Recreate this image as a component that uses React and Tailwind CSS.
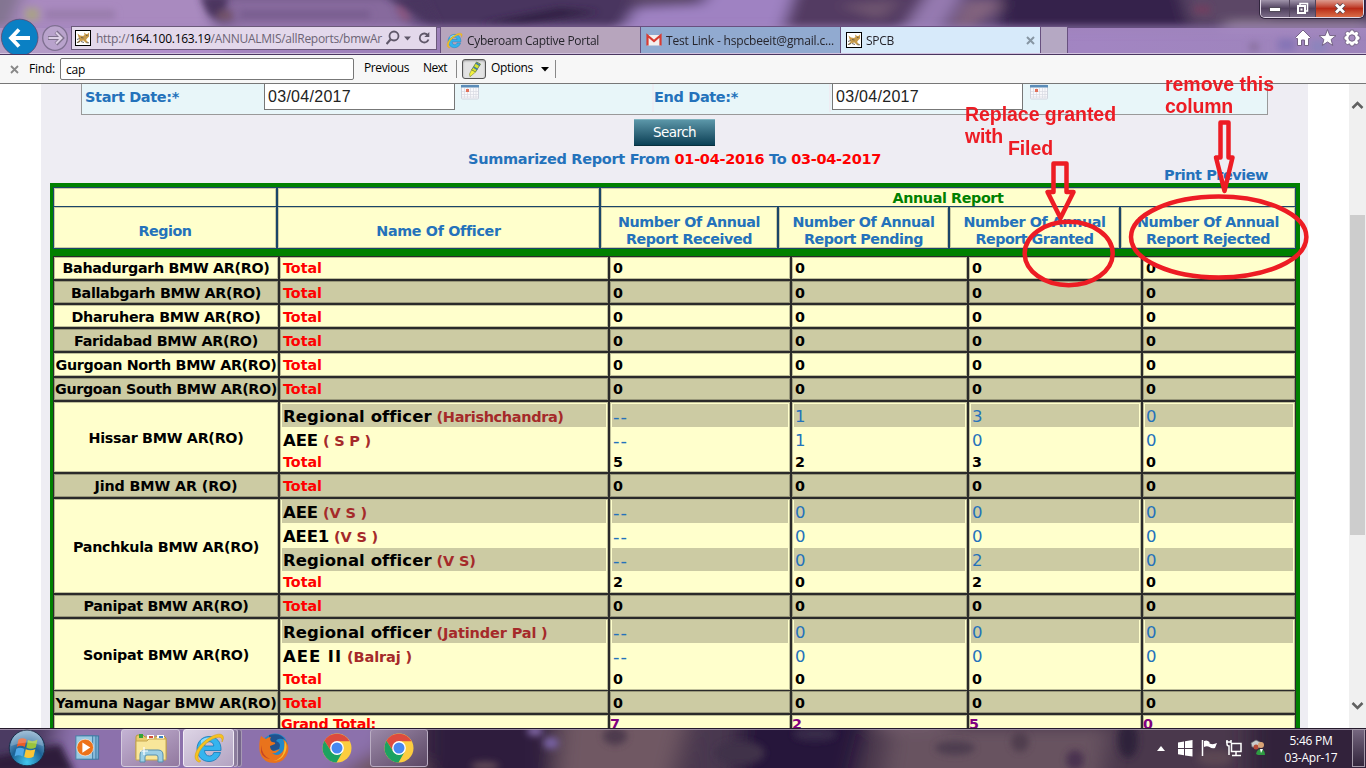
import React, { useLayoutEffect, useRef } from "react";

// Text run set to a known width by adjusting its tracking.
function Fit({ w, className = "", children }) {
  const ref = useRef(null);
  useLayoutEffect(() => {
    const el = ref.current;
    el.style.letterSpacing = "0px";
    const natural = el.getBoundingClientRect().width;
    el.style.letterSpacing = (w - natural) / el.textContent.length + "px";
  }, [w]);
  return (
    <span ref={ref} className={"inline-block shrink-0 whitespace-pre " + className}>
      {children}
    </span>
  );
}

const UI = "font-['Open_Sans','Noto_Sans',sans-serif]";

function TopWallpaper() {
  return (
    <svg className="absolute inset-0" width="1366" height="55" viewBox="0 0 1366 55" preserveAspectRatio="none">
      <defs>
        <filter id="b1" filterUnits="userSpaceOnUse" x="-60" y="-60" width="1500" height="180"><feGaussianBlur stdDeviation="8 5" /></filter>
        <filter id="b2" filterUnits="userSpaceOnUse" x="-60" y="-60" width="1500" height="180"><feGaussianBlur stdDeviation="3.5" /></filter>
        <linearGradient id="navglass" x1="0" x2="1" y1="0" y2="0">
          <stop offset="0" stopColor="#b7a3c6" /><stop offset=".12" stopColor="#b38fcd" />
          <stop offset=".32" stopColor="#a487c2" /><stop offset=".8" stopColor="#ac8ecd" /><stop offset="1" stopColor="#a68cc4" />
        </linearGradient>
      </defs>
      <rect width="1366" height="55" fill="#594472" />
      <g filter="url(#b1)">
        <path d="M-20 -20H205L225 60H-20Z" fill="#a98abf" />
        <path d="M-20 -10H25L5 40H-20Z" fill="#837591" />
        <path d="M218 -4H395L420 40H232Z" fill="#876a9d" />
        <path d="M400 -10H640V35H440Z" fill="#49345e" />
        <path d="M636 8L700 5L720 -20H810L775 40H615Z" fill="#9f82c2" />
        <path d="M640 -18H715L690 4H630Z" fill="#5d4969" />
        <path d="M795 -10H930V35H780Z" fill="#523b62" />
        <path d="M840 5L900 0L880 20Z" fill="#6e546f" />
        <path d="M930 -10H965L940 35H900Z" fill="#957ab0" />
        <path d="M965 0H1010L970 30H950Z" fill="#82647e" />
        <path d="M1000 -10H1370V32H1000Z" fill="#35234b" />
        <path d="M1180 -10H1270V25H1190Z" fill="#5b4766" />
        <path d="M1225 20H1370V32H1225Z" fill="#86758d" />
      </g>
      <g filter="url(#b2)">
        <rect x="25" y="8" width="14" height="13" fill="#a9a189" />
        <rect x="45" y="10" width="70" height="9" fill="#987cab" />
        <path d="M480 24L560 8L600 12L520 25Z" fill="#302044" />
        <path d="M200 -4H228L222 22L208 14Z" fill="#4b365f" />
        <rect x="218" y="11" width="14" height="9" fill="#735367" />
        <rect x="240" y="11" width="130" height="7" fill="#765b8d" />
        <path d="M385 -4H425L440 28Z" fill="#49345f" />
        <path d="M398 8L408 20" stroke="#9c5277" strokeWidth="4" />
        <rect x="1194" y="6" width="16" height="7" fill="#743c5e" />
      </g>
      <rect y="28" width="1366" height="26" fill="url(#navglass)" opacity=".88" />
      <g filter="url(#b2)">
        <rect x="-10" y="25" width="1400" height="8" fill="#a386bf" opacity=".6" />
        <circle cx="1254" cy="47" r="5" fill="#89719f" />
        <rect x="1278" y="39" width="17" height="12" fill="#8574b5" />
        <rect x="1311" y="41" width="15" height="11" fill="#8a84bc" />
      </g>
      <rect y="53" width="1366" height="1" fill="#d2c3df" />
      <rect y="54" width="1366" height="1" fill="#4a3660" />
    </svg>
  );
}

function CatIcon() {
  return (
    <svg width="16" height="16" viewBox="0 0 16 16" className="shrink-0">
      <rect x=".5" y=".5" width="15" height="15" fill="#fff" stroke="#000" />
      <path d="M2.500 3.500L5 5.500L8 6L9.500 5L9 2.500L11 4H12.500L14 2.500V6.500L12 8.500L11 10L13.500 12.500L11 13L8.500 10.500L6 11L3 13H1.500L4.500 10L3.500 7Z" fill="#c79a4a" />
      <path d="M2 9.500L4.500 8.500M6 11.500L9 12.500M2 12.500L5 11.500M11.500 12.800H14M11 5.500H12.500M6 7.500L8.500 8" stroke="#5d5a55" fill="none" strokeWidth=".9" />
    </svg>
  );
}

function IELogo({ size }) {
  return (
    <svg width={size} height={size} viewBox="0 0 32 32" className="shrink-0">
      <path d="M27.500 20.500C26 26 21.500 29.500 16 29.500C9 29.500 4 24 4 17C4 10 9 4.500 16 4.500C23.500 4.500 28.500 10 28 18.500H11.500C11.800 22 13.500 24 16.500 24C18.700 24 20 23 20.800 20.500ZM11.500 14H20.800C20.500 11.300 19 9.700 16.200 9.700C13.500 9.700 12 11.300 11.500 14Z" fill="#35b4ee" stroke="#1279b7" strokeWidth=".8" fillRule="evenodd" />
      <path d="M8 8.500C11 5 18 4.500 22 7C18 6 12 7 8 12Z" fill="#b7e8fc" opacity=".7" />
      <path d="M5.500 30C-1 27 2.500 18 9 11.500C16 4.500 26 0 29.500 3.200C31 4.800 30.500 7.500 29 10C29.500 6.800 28.300 5 25.500 5.300C18 6 8 14.500 5.500 22C4.500 25.500 5 28.500 7.500 28.700C8 29.300 7 30.300 5.500 30Z" fill="#f6c220" stroke="#d59b0b" strokeWidth=".5" />
    </svg>
  );
}

function Chrome() {
  return (
    <svg width="30" height="30" viewBox="0 0 30 30">
      <circle cx="15" cy="15" r="14.500" fill="#fccd3f" />
      <path d="M2.400 7.800A14.500 14.500 0 0 1 27.600 8.200H15L9.200 18.200Z" fill="#dd4b3e" />
      <path d="M2.400 7.800L9.300 18.600Q12 22 15.500 21.800L20.800 18.500L14.500 29.500A14.500 14.500 0 0 1 2.400 7.800Z" fill="#1ca261" />
      <circle cx="15" cy="15" r="6.900" fill="#fff" />
      <circle cx="15" cy="15" r="5.500" fill="#4688f1" />
    </svg>
  );
}

function Tab({ w, icon, label, lw, cls, close }) {
  return (
    <div className={"flex h-[27px] shrink-0 items-center gap-1 border-t border-r border-[#68507f] pl-[5px] " + w + " " + cls}>
      {icon}
      <Fit w={lw} className="pt-[2px] text-[12px] text-[#26252c]">{label}</Fit>
      {close && (
        <svg width="9" height="9" viewBox="0 0 9 9" className="mr-[5px] ml-auto"><path d="M1 1L8 8M8 1L1 8" stroke="#8796a3" strokeWidth="2" /></svg>
      )}
    </div>
  );
}

function BrowserTop() {
  return (
    <header className={"relative h-[55px] shrink-0 overflow-hidden " + UI}>
      <TopWallpaper />
      <div className="relative flex h-[26px] justify-end pr-[2px]">
        <div className="flex h-[18px] overflow-hidden rounded-b-[5px] border border-t-0 border-[#e1d8e7] shadow-[0_0_0_1px_#30243c]">
          <div className="flex w-[29px] items-center justify-center border-r border-[#51445b] bg-linear-to-b from-[#a094aa] via-[#50415e] to-[#7a6b87]">
            <svg width="12" height="6" viewBox="0 0 12 6"><rect x=".5" y="1.500" width="11" height="4" fill="#fff" stroke="#514a58" /></svg>
          </div>
          <div className="flex w-[26px] items-center justify-center border-r border-[#51445b] bg-linear-to-b from-[#a094aa] via-[#50415e] to-[#7a6b87]">
            <svg width="13" height="13" viewBox="0 0 13 13"><path d="M4 4V1.500H11.500V9H9.500" fill="none" stroke="#fff" strokeWidth="1.500" /><rect x="2" y="4" width="7" height="7" fill="#665871" stroke="#fff" strokeWidth="2" /><rect x="4.500" y="6.500" width="2" height="2" fill="#fff" /></svg>
          </div>
          <div className="flex w-[47px] items-center justify-center bg-linear-to-b from-[#dc9b8f] via-[#b92a16] to-[#d96b47]">
            <svg width="12" height="11" viewBox="0 0 12 11"><path d="M2 1.500L10 9.500M10 1.500L2 9.500" stroke="#57454d" strokeWidth="4.500" /><path d="M2 1.500L10 9.500M10 1.500L2 9.500" stroke="#fff" strokeWidth="2.800" /></svg>
          </div>
        </div>
      </div>
      <div className="relative flex h-[27px] items-start">
        <svg width="71" height="36" viewBox="0 0 71 36" className="-mt-[8px] shrink-0">
          <circle cx="19.700" cy="19.500" r="18.300" fill="#0a80c4" stroke="#5d4a70" strokeWidth=".8" />
          <path d="M30 20H12M19 11.500L11 20L19 28.500" fill="none" stroke="#fff" strokeWidth="3.800" />
          <circle cx="55" cy="20" r="12.300" fill="#b9a3cc" stroke="#7f7091" strokeWidth="1.300" />
          <path d="M48 20H61M56 14L62 20L56 26" fill="none" stroke="#7e718c" strokeWidth="4" />
          <path d="M48.500 20H61M56 14.500L61.500 20L56 25.500" fill="none" stroke="#ddd0e6" strokeWidth="2" />
        </svg>
        <div className="flex h-[24px] w-[366px] shrink-0 items-center border border-[#6b5a7a] bg-[#e3d8eb] pl-[3px]">
          <CatIcon />
          <Fit w={286} className="ml-[5px] pt-px text-[12px] text-[#6c6475]">http://<span className="text-black">164.100.163.19</span>/ANNUALMIS/allReports/bmwAr</Fit>
          <svg width="50" height="18" viewBox="0 0 50 18" className="ml-[4px] shrink-0">
            <circle cx="8" cy="7" r="4.500" fill="none" stroke="#5f5769" strokeWidth="1.800" />
            <path d="M4.500 10.500L.5 15" stroke="#5f5769" strokeWidth="2.200" />
            <path d="M18 7.500H25L21.500 11.500Z" fill="#5f5769" />
            <path d="M42 6.500A4.500 4.500 0 1 0 42.500 10.500" fill="none" stroke="#5f5769" strokeWidth="1.800" /><path d="M43.300 3V8H38.300Z" fill="#5f5769" />
          </svg>
        </div>
        <div className="w-[3px] shrink-0" />
        <Tab w="w-[201px] border-l" cls="bg-[#b7a5bd]" icon={<IELogo size={17} />} lw={132} label="Cyberoam Captive Portal" />
        <Tab w="w-[200px]" cls="bg-[#91aad0]" lw={168} label="Test Link - hspcbeeit@gmail.c..." icon={
          <svg width="16" height="16" viewBox="0 0 16 16" className="shrink-0"><rect x="1" y="3" width="14" height="10.500" fill="#f4efee" /><path d="M1.500 13.500V3.500L8 9L14.500 3.500V13.500" fill="none" stroke="#d83b32" strokeWidth="2.200" /></svg>
        } />
        <Tab w="w-[200px]" cls="bg-[#d7eafa]" icon={<CatIcon />} lw={28} label="SPCB" close />
        <div className="h-[27px] w-[27px] shrink-0 border-t border-r border-[#68507f] bg-[#b5a8c3]" />
        <svg width="70" height="24" viewBox="4 0 70 24" className="mr-px ml-auto shrink-0">
          <g fill="#fff" stroke="#756386" strokeWidth="1">
            <path d="M12 4L19.500 11.500L18 13L17.500 12.500V19.500H13.500V14H10.500V19.500H6.500V12.500L6 13L4.500 11.500Z" />
            <path d="M36.500 3.500L38.800 9.500L45 9.700L40.100 13.500L41.800 19.500L36.500 16L31.200 19.500L32.900 13.500L28 9.700L34.200 9.500Z" />
            <path d="M59.500 4H62.500L63.300 6.200L65.800 5.200L67.800 7.200L66.800 9.500L69 10.500V13.500L66.800 14.500L67.800 16.800L65.800 18.800L63.500 17.800L62.500 20H59.500L58.500 17.800L56.200 18.800L54.200 16.800L55.200 14.500L53 13.500V10.500L55.200 9.500L54.200 7.200L56.200 5.200L58.700 6.200Z" />
            <circle cx="61" cy="12" r="3.200" fill="#a78dc0" />
          </g>
        </svg>
      </div>
    </header>
  );
}

function FindBar() {
  return (
    <div className={"flex h-[29px] shrink-0 items-center border-b border-[#777] bg-[#f7f7f7] text-[12px] text-black " + UI}>
      <svg width="9" height="9" viewBox="0 0 9 9" className="ml-[10px] shrink-0"><path d="M1 1L8 8M8 1L1 8" stroke="#888" strokeWidth="1.800" /></svg>
      <Fit w={26} className="ml-[10px]">Find:</Fit>
      <div className="ml-[5px] flex h-[22px] w-[294px] shrink-0 items-center rounded-[2px] border border-[#777] bg-white pt-[2px] pl-[5px]"><Fit w={19}>cap</Fit></div>
      <Fit w={45} className="ml-[10px] -mt-[2px]">Previous</Fit>
      <Fit w={24} className="ml-[14px] -mt-[2px]">Next</Fit>
      <div className="ml-[9px] h-[18px] w-px shrink-0 bg-[#888]" />
      <div className="ml-[5px] flex h-5 w-6 shrink-0 items-center justify-center rounded-[3px] border border-[#555] bg-[#e3e3e3] shadow-[inset_0_1px_2px_#999]">
        <svg width="18" height="18" viewBox="0 0 18 18"><path d="M11.500 2L15.500 4L10.500 12L6.500 10Z" fill="#d9e42c" stroke="#5e7b3a" strokeWidth=".8" /><path d="M11 3L15 5.500M8.500 7L12.500 9.500" stroke="#417ba5" strokeWidth="1.500" /><path d="M6.500 10L10.500 12L5 16.800L4.500 14Z" fill="#f4f13c" stroke="#7d8a38" strokeWidth=".6" /></svg>
      </div>
      <Fit w={42} className="ml-[5px] -mt-[2px]">Options</Fit>
      <svg width="8" height="5" viewBox="0 0 8 5" className="ml-[8px] shrink-0"><path d="M0 0H8L4 4.500Z" fill="#000" /></svg>
      <div className="ml-[6px] h-[18px] w-px shrink-0 bg-[#888]" />
    </div>
  );
}

function Calendar() {
  return (
    <svg width="18" height="16" viewBox="0 0 18 16" className="shrink-0">
      <rect x=".5" y="1" width="17" height="14" rx="1" fill="#f8f8fb" stroke="#d0d4de" />
      <rect x="0" y="1" width="18" height="2.500" fill="#5b8cb8" />
      <path d="M3.500 4V14M6.500 4V14M9.500 4V14M12.500 4V14M15 4V14M1 7.500H17M1 10.500H17M1 13H17" stroke="#d9dae2" strokeWidth=".7" />
      <rect x="5" y="5" width="3" height="3" fill="#e1705a" />
    </svg>
  );
}

function DateField() {
  return (
    <div className="-mt-px flex h-[27px] w-[191px] shrink-0 items-center border border-[#777] bg-white pl-[3px] font-['Liberation_Sans',Arial,sans-serif] text-[16px] font-normal text-[#222]">
      <Fit w={83}>03/04/2017</Fit>
    </div>
  );
}

function SearchForm() {
  return (
    <div className="ml-[40px] flex h-[31px] w-[1187px] shrink-0 items-start border border-t-0 border-[#999] bg-[#e8f6f9] text-[14.500px] font-bold text-[#2472bb]">
      <div className="flex h-[28px] w-[182px] shrink-0 items-center pl-[3px]"><Fit w={94}>Start Date:*</Fit></div>
      <DateField />
      <div className="ml-[6px] flex w-[192px] shrink-0"><Calendar /></div>
      <div className="flex h-[28px] w-[179px] shrink-0 items-center border-r-2 border-l-2 border-[#eeedf3] -ml-px pl-0"><Fit w={84}>End Date:*</Fit></div>
      <div className="ml-px flex"><DateField /></div>
      <div className="ml-[7px] flex"><Calendar /></div>
    </div>
  );
}

const CELL = "border border-[#2a2a2a] shadow-[inset_0_0_0_1px_rgba(0,0,0,0.25)] ";
const HCELL = "border border-[#1b4569] shadow-[inset_0_0_0_1px_rgba(0,0,0,0.2)] bg-[#ffffcc] ";

function HeadCell({ a, aw, b, bw }) {
  return (
    <div className={HCELL + "flex flex-col items-center pt-[7px] leading-[17px]"}>
      <Fit w={aw}>{a}</Fit>
      <Fit w={bw}>{b}</Fit>
    </div>
  );
}

const zero = ["0", "0", "0", "0"];
const regions = [
  { name: "Bahadurgarh BMW AR(RO)", w: 207, h: "h-[24px]", totals: zero, pt: "" },
  { name: "Ballabgarh BMW AR(RO)", w: 190, h: "h-[24px]", totals: zero, pt: "pt-[2px]", alt: true },
  { name: "Dharuhera BMW AR(RO)", w: 189, h: "h-[24px]", totals: zero, pt: "pt-[2px]" },
  { name: "Faridabad BMW AR(RO)", w: 184, h: "h-[24px]", totals: zero, pt: "pt-[2px]", alt: true },
  { name: "Gurgoan North BMW AR(RO)", w: 221, h: "h-[25px]", totals: zero, pt: "pt-px" },
  { name: "Gurgoan South BMW AR(RO)", w: 222, h: "h-[24px]", totals: zero, pt: "pt-px", alt: true },
  {
    name: "Hissar BMW AR(RO)", w: 155, h: "h-[72px]", top: "pt-[2px]", totalH: "h-[20px]", totals: ["5", "2", "3", "0"],
    officers: [
      { role: "Regional officer", rw: 147, who: "(Harishchandra)", ww: 127, v: ["--", "1", "3", "0"], band: true },
      { role: "AEE", rw: 35, who: "( S P )", ww: 48, v: ["--", "1", "0", "0"] },
    ],
  },
  { name: "Jind BMW AR (RO)", w: 143, h: "h-[25px]", totals: zero, pt: "pt-[2px]", alt: true },
  {
    name: "Panchkula BMW AR(RO)", w: 186, h: "h-[96px]", top: "pt-px", totalH: "h-[20px]", totals: ["2", "0", "2", "0"],
    officers: [
      { role: "AEE", rw: 35, who: "(V S )", ww: 44, v: ["--", "0", "0", "0"], band: true },
      { role: "AEE1", rw: 46, who: "(V S )", ww: 44, v: ["--", "0", "0", "0"] },
      { role: "Regional officer", rw: 147, who: "(V S)", ww: 39, v: ["--", "0", "2", "0"], band: true },
    ],
  },
  { name: "Panipat BMW AR(RO)", w: 165, h: "h-[24px]", totals: zero, pt: "", alt: true },
  {
    name: "Sonipat BMW AR(RO)", w: 166, h: "h-[72px]", top: "pt-px", totalH: "h-[22px]", totals: zero,
    officers: [
      { role: "Regional officer", rw: 147, who: "(Jatinder Pal )", ww: 111, v: ["--", "0", "0", "0"], band: true },
      { role: "AEE II", rw: 59, who: "(Balraj )", ww: 65, v: ["--", "0", "0", "0"] },
    ],
  },
  { name: "Yamuna Nagar BMW AR(RO)", w: 221, h: "h-[24px]", totals: zero, pt: "pt-[2px]", alt: true },
];

function Band({ on, children }) {
  return (
    <div className="h-[24px]">
      <div className={"flex h-[23px] items-center pt-[2px] pl-px " + (on ? "bg-[#cccba3]" : "")}>{children}</div>
    </div>
  );
}

function RegionRow({ r }) {
  const bg = r.alt ? "bg-[#cccba3] " : "bg-[#ffffcc] ";
  const cell = CELL + bg + (r.officers ? "px-[2px] " + r.top : "flex items-center pl-[3px] " + r.pt);
  return (
    <div className={"grid grid-cols-[226px_330px_182px_177px_174px_154px] " + r.h}>
      <div className={CELL + bg + "flex items-center justify-center " + (r.officers ? "pt-[2px]" : r.pt)}>
        <Fit w={r.w}>{r.name}</Fit>
      </div>
      <div className={cell}>
        {r.officers?.map((o) => (
          <Band key={o.role} on={o.band}>
            <Fit w={o.rw} className="text-[16.500px]">{o.role}</Fit>
            <Fit w={o.ww} className="ml-[5px] pt-px text-[14.500px] text-[#a52a2a]">{o.who}</Fit>
          </Band>
        ))}
        <div className={"flex items-center text-[#ff0000] " + (r.officers ? "pl-px " + r.totalH : "")}><Fit w={39}>Total</Fit></div>
      </div>
      {r.totals.map((t, i) => (
        <div key={i} className={cell}>
          {r.officers?.map((o) => (
            <Band key={o.role} on={o.band}>
              <Fit w={o.v[i].length > 1 ? 15 : 10} className={"font-normal text-[#2472bb] " + (o.v[i].length > 1 ? "text-[18px]" : "text-[16.500px]")}>{o.v[i]}</Fit>
            </Band>
          ))}
          <div className={"flex items-center " + (r.officers ? "pl-px " + r.totalH : "")}>{t}</div>
        </div>
      ))}
    </div>
  );
}

function Report() {
  return (
    <div className="ml-[9px] w-[1250px] shrink-0 border-x-[3px] border-t-[4px] border-r-[4px] border-[#008000] bg-[#008000] text-[14.300px] leading-[17px] font-bold text-black">
      <div className="grid h-[19px] grid-cols-[224px_323px_696px]">
        <div className={HCELL} />
        <div className={HCELL} />
        <div className={HCELL + "flex items-center justify-center pt-[2px] text-[#008000]"}><Fit w={111}>Annual Report</Fit></div>
      </div>
      <div className="mb-[8px] grid h-[42px] grid-cols-[224px_323px_178px_171px_171px_176px] text-[#2472bb]">
        <div className={HCELL + "flex items-center justify-center pt-[8px]"}><Fit w={53}>Region</Fit></div>
        <div className={HCELL + "flex items-center justify-center pt-[8px]"}><Fit w={123}>Name Of Officer</Fit></div>
        <HeadCell a="Number Of Annual" aw={142} b="Report Received" bw={126} />
        <HeadCell a="Number Of Annual" aw={142} b="Report Pending" bw={119} />
        <HeadCell a="Number Of Annual" aw={142} b="Report Granted" bw={118} />
        <HeadCell a="Number Of Annual" aw={142} b="Report Rejected" bw={124} />
      </div>
      {regions.map((r) => <RegionRow key={r.name} r={r} />)}
      <div className="grid h-[30px] grid-cols-[226px_330px_182px_177px_174px_154px] text-[#800080]">
        <div className={CELL + "bg-[#ffffcc]"} />
        <div className={CELL + "bg-[#ffffcc] pt-px pl-px text-[#ff0000]"}><Fit w={95}>Grand Total:</Fit></div>
        {["7", "2", "5", "0"].map((v) => <div key={v} className={CELL + "bg-[#ffffcc] pt-px"}>{v}</div>)}
      </div>
    </div>
  );
}

function Page() {
  return (
    <div className="flex h-[644px] shrink-0 overflow-hidden bg-white font-['DejaVu_Sans',Verdana,sans-serif]">
      <div className="ml-[41px] flex w-[1267px] shrink-0 flex-col bg-[#eeedf3]">
        <SearchForm />
        <div className="mt-[4px] ml-[593px] flex h-[27px] w-[81px] shrink-0 items-center justify-center border-t border-b border-t-[#7fb3bf] border-b-[#08303d] bg-linear-to-b from-[#5b96a8] to-[#094156] text-[13.500px] text-white"><Fit w={43}>Search</Fit></div>
        <div className="mt-[4px] ml-[427px] flex h-[18px] shrink-0 items-center pt-px text-[14.500px] font-bold text-[#2472bb]">
          <Fit w={413}>Summarized Report From <span className="text-[#ff0000]">01-04-2016</span> To <span className="text-[#ff0000]">03-04-2017</span></Fit>
        </div>
        <div className="flex h-[15px] shrink-0 justify-end pr-[40px] text-[14.500px] leading-[15px] font-bold text-[#2472bb]"><Fit w={104}>Print Preview</Fit></div>
        <Report />
      </div>
      <div className="ml-auto flex w-[17px] shrink-0 flex-col items-center bg-[#f0f0f0] pt-[16px]">
        <svg width="13" height="10" viewBox="0 0 13 10"><path d="M1.500 8L6.500 3L11.500 8" fill="none" stroke="#606060" strokeWidth="2.500" /></svg>
        <div className="mt-[105px] h-[320px] w-[15px] bg-[#cdcdcd]" />
        <svg width="13" height="10" viewBox="0 0 13 10" className="mt-[166px]"><path d="M1.500 2L6.500 7L11.500 2" fill="none" stroke="#606060" strokeWidth="2.500" /></svg>
      </div>
    </div>
  );
}

function TaskWallpaper() {
  return (
    <svg className="absolute inset-0" width="1366" height="40" viewBox="0 0 1366 40">
      <defs>
        <filter id="b3" filterUnits="userSpaceOnUse" x="-60" y="-60" width="1500" height="160"><feGaussianBlur stdDeviation="11 7" /></filter>
      </defs>
      <rect width="1366" height="40" fill="#4a384c" />
      <g filter="url(#b3)">
        <path d="M-40 -20H55V60H-40Z" fill="#4c3a62" />
        <path d="M60 -20H400L370 60H50Z" fill="#8c71ac" />
        <path d="M330 50L390 15L440 50Z" fill="#6e5560" />
        <path d="M425 -20H550V60H425Z" fill="#2d1c3c" />
        <path d="M562 -20H690L670 60H555Z" fill="#705863" />
        <path d="M690 -20H750V60H690Z" fill="#493850" />
        <path d="M740 -20H870L850 60H735Z" fill="#25143a" />
        <path d="M890 0H1110L1100 60H880Z" fill="#675260" />
        <path d="M870 -20H960L940 5H880Z" fill="#6e5868" />
        <path d="M1250 -20H1400V60H1250Z" fill="#30243a" />
      </g>
      <g filter="url(#b2)">
        <path d="M-10 30L60 16L75 45H-10Z" fill="#2d1d3a" />
        <ellipse cx="535" cy="3" rx="8" ry="5" fill="#8269a8" /><ellipse cx="551" cy="15" rx="8" ry="6" fill="#7862a4" />
        <ellipse cx="485" cy="38" rx="14" ry="4" fill="#66505a" />
        <ellipse cx="615" cy="8" rx="12" ry="9" fill="#4d3b4e" />
        <ellipse cx="740" cy="25" rx="25" ry="12" fill="#3f3049" />
        <ellipse cx="815" cy="6" rx="22" ry="7" fill="#392a48" />
        <ellipse cx="955" cy="20" rx="20" ry="7" fill="#4e3d50" />
        <ellipse cx="1020" cy="14" rx="9" ry="10" fill="#4f3d4e" />
        <ellipse cx="1075" cy="32" rx="9" ry="10" fill="#48304f" />
        <ellipse cx="1128" cy="12" rx="10" ry="18" fill="#2f203b" />
        <ellipse cx="1215" cy="30" rx="18" ry="8" fill="#5b4752" />
      </g>
      <rect width="1366" height="1" fill="#241a2c" /><rect y="1" width="1366" height="1" fill="#b3a6bb" opacity=".75" />
    </svg>
  );
}

function Taskbar() {
  return (
    <footer className={"relative h-[40px] shrink-0 overflow-hidden " + UI}>
      <TaskWallpaper />
      <div className="relative flex h-full items-center">
        <svg width="38" height="38" viewBox="0 0 38 38" className="ml-[8px] shrink-0">
          <defs><radialGradient id="orb" cx=".5" cy=".9" r=".9"><stop offset="0" stopColor="#41c8ef" /><stop offset=".5" stopColor="#1c6296" /><stop offset="1" stopColor="#8cb1cf" /></radialGradient></defs>
          <circle cx="19" cy="19" r="17.800" fill="url(#orb)" stroke="#1a2f4a" />
          <path d="M10.500 10.500Q14 8 18.500 10.500L16.800 18Q12.500 15.500 8.800 18Z" fill="#ea5c28" />
          <path d="M20 11Q24.500 13.500 29.500 10.500L27.800 18.500Q23 21 18.300 18.500Z" fill="#9ac43b" />
          <path d="M8.300 19.800Q12 17.500 16.300 20L14.600 27.500Q10.500 25 6.600 27.500Z" fill="#50a9e8" />
          <path d="M17.800 20.200Q22 22.500 27.300 20.200L25.500 27.800Q21 30.300 16.200 28Z" fill="#fac636" />
          <path d="M3 17A16 16 0 0 1 35 17Q19 10 3 17Z" fill="#fff" opacity=".22" />
        </svg>
        <svg width="27" height="26" viewBox="0 0 28 28" className="ml-[28px] shrink-0">
          <rect x="9" y="1" width="17" height="25" fill="#72a9cd" stroke="#3b769f" /><rect x="6" y="1" width="17" height="25" fill="#8abbda" stroke="#437da5" /><rect x="1.500" y="1" width="18" height="25" fill="#9bcae2" stroke="#437da5" />
          <circle cx="11.500" cy="13.500" r="9" fill="#ed7219" stroke="#fff" strokeWidth=".6" /><path d="M8.500 8L17 13.500L8.500 19Z" fill="#fff" />
        </svg>
        <div className="ml-[20px] flex h-[38px] w-[59px] shrink-0 items-center justify-center rounded-[3px] border border-[#d4cbdd] bg-linear-to-br from-[#c4b3d4] to-[#92799f]">
          <svg width="34" height="32" viewBox="0 0 34 32">
            <path d="M2 5Q2 3 4 3H9L11 5H22L23 4H30L32 6V26H2Z" fill="#e9cc6c" stroke="#ba983e" />
            <path d="M5 2H9V6H5Z" fill="#35a23a" /><path d="M13 3H20V7H13Z" fill="#fff" /><path d="M15 4H19V6H15Z" fill="#d4513a" /><path d="M23 3H30V7H23Z" fill="#fff" /><path d="M25 4H29V6H25Z" fill="#3c83c3" />
            <path d="M2 9H13L15 7H32V28H2Z" fill="#f8e69a" stroke="#c6a64e" />
            <path d="M6 30V23Q6 18 11 18H24Q29 18 29 23V30H24V25Q24 23 22 23H13Q11 23 11 25V30Z" fill="#9ccfe5" stroke="#578fad" />
            <path d="M10 15V23M6 19H14" stroke="#fff" strokeWidth="1.200" />
          </svg>
        </div>
        <div className="ml-[3px] flex h-[38px] w-[59px] shrink-0">
          <div className="z-20 flex w-[51px] items-center justify-center rounded-[3px] border border-[#f0ebf4] bg-linear-to-br from-[#ddd4e5] to-[#b3a4c2]"><IELogo size={32} /></div>
          <div className="w-[4px] rounded-r-[3px] border border-l-0 border-[#bcb0c8] bg-[#8b7c9c]" />
          <div className="w-[4px] rounded-r-[3px] border border-l-0 border-[#a79ab4] bg-[#75668a]" />
        </div>
        <svg width="32" height="32" viewBox="0 0 32 32" className="ml-[16px] shrink-0">
          <circle cx="17" cy="14.500" r="13" fill="#2389c9" /><path d="M11 3Q23 0 27 8Q20 5 18 9Q24 11 21 17L12 20Z" fill="#20528f" />
          <path d="M3 4Q5 6 8 7Q10 5 13 5Q11 8 14 10Q18 10 17 12L12 14Q12 19 17 19L22 17Q19 22 14 21Q20 26 25 19Q28 14 25 7Q32 12 30 20Q27 30 17 31Q5 31 2 21Q0 12 3 4Z" fill="#e9731c" />
          <path d="M27 9Q30 15 27 21Q23 29 15 29Q25 27 26 18Z" fill="#f7be2c" /><path d="M3 13Q4 24 12 27Q5 26 3 20Z" fill="#c94624" />
        </svg>
        <div className="ml-[32px] shrink-0"><Chrome /></div>
        <div className="ml-[18px] flex h-[38px] w-[58px] shrink-0 items-center justify-center rounded-[3px] border border-[#b9acc2] bg-linear-to-br from-[#9c8aa9] to-[#5c4865]"><Chrome /></div>
        <svg width="118" height="26" viewBox="0 0 118 26" className="ml-auto shrink-0">
          <path d="M2 16L6 11L10 16Z" fill="#fff" />
          <path d="M23 7.500L29 6.500V13H23ZM30 6.300L37.500 5V13H30ZM23 14H29V20.200L23 19.300ZM30 14H37.500V21.500L30 20.400Z" fill="#fff" />
          <path d="M47.500 5V21" stroke="#fff" strokeWidth="1.500" /><path d="M49 6Q52 4.500 54.500 7V8.500Q58 10 62 8L60 13Q57 14 54.500 12Q52 10.500 49 12Z" fill="#fff" />
          <rect x="76.500" y="8.500" width="9.500" height="8" fill="#49384d" stroke="#fff" strokeWidth="1.500" /><path d="M72 5V9Q72 11 74 11V20M71 7H76M76 5V8M81 17V20M77 20.500H86" stroke="#fff" strokeWidth="1.500" fill="none" />
          <path d="M96 8L101 5L107 8L104 13L97 12Z" fill="#c9cbcc" stroke="#626669" strokeWidth=".7" /><circle cx="101" cy="12" r="2.500" fill="#b44b37" /><circle cx="106" cy="10" r="3" fill="#d9a375" /><path d="M101 19Q102 14 106 14Q110 15 110 20H103Z" fill="#2e9b42" /><path d="M105 14L106 18L108 14" fill="#fff" />
        </svg>
        <div className="ml-[8px] flex w-[60px] shrink-0 flex-col items-center pt-px text-[12px] leading-[17px] text-white">
          <Fit w={43}>5:46 PM</Fit><Fit w={53}>03-Apr-17</Fit>
        </div>
        <div className="ml-[11px] h-[38px] w-[13px] shrink-0 border border-[#a49aa9] bg-linear-to-b from-[#75667f] to-[#33263c]" />
        <div className="w-px shrink-0" />
      </div>
    </footer>
  );
}

function Note({ pos, w, children }) {
  return <div className={"absolute text-[19.500px] leading-[22px] " + pos}><Fit w={w}>{children}</Fit></div>;
}

function Annotations() {
  return (
    <div className="pointer-events-none absolute inset-0 font-['Liberation_Sans',Arial,sans-serif] font-bold text-[#ed1c24]">
      <Note pos="top-[73px] left-[1165px]" w={109}>remove this</Note>
      <Note pos="top-[95px] left-[1165px]" w={68}>column</Note>
      <Note pos="top-[103px] left-[965px]" w={151}>Replace granted</Note>
      <Note pos="top-[125px] left-[965px]" w={38}>with</Note>
      <Note pos="top-[137px] left-[1008px]" w={45}>Filed</Note>
      <svg width="1366" height="768" viewBox="0 0 1366 768" fill="none" stroke="#ed1c24" strokeWidth="4.500" strokeLinejoin="round">
        <ellipse cx="1068.700" cy="253.500" rx="44" ry="31.700" />
        <ellipse cx="1218.700" cy="237" rx="87.700" ry="40.500" />
        <path d="M1053.500 163.500H1066.500V192H1073.500L1060.500 218L1047.500 192H1053.500Z" />
        <path d="M1220.500 122.500H1228.500V157.500H1232.500L1224.500 191L1216 157.500H1220.500Z" />
      </svg>
    </div>
  );
}

export default function App() {
  return (
    <div className="relative flex h-[768px] w-[1366px] flex-col overflow-hidden">
      <BrowserTop />
      <FindBar />
      <Page />
      <Taskbar />
      <Annotations />
    </div>
  );
}
